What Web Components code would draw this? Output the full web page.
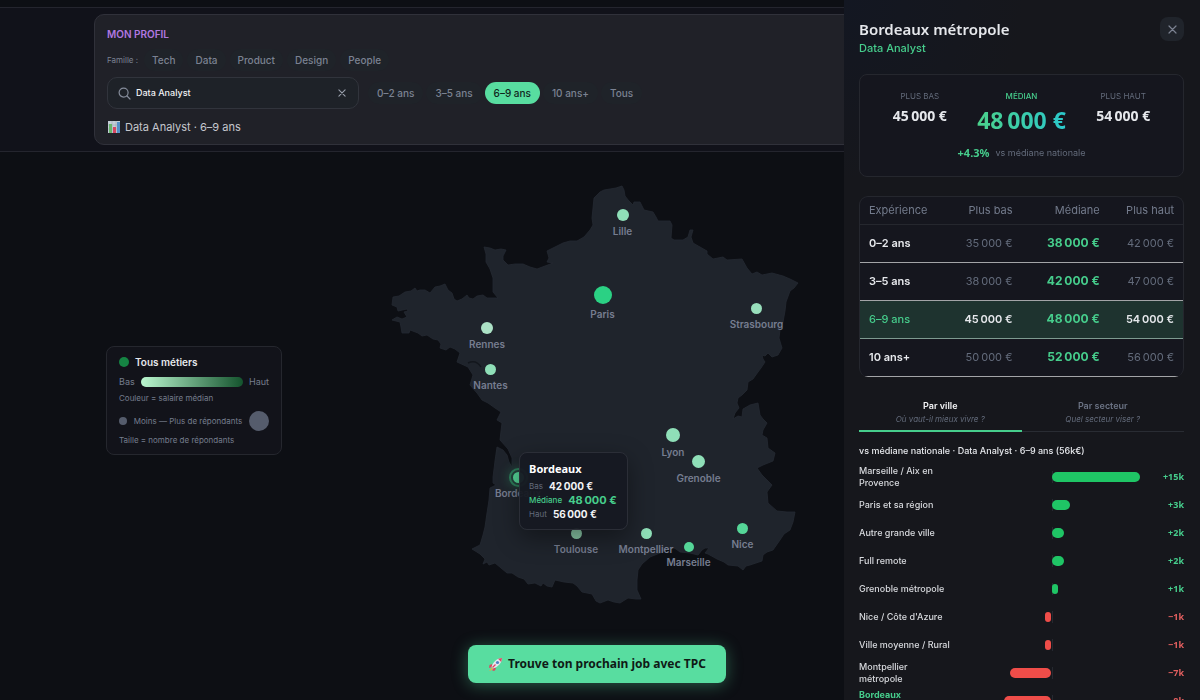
<!DOCTYPE html>
<html lang="fr">
<head>
<meta charset="utf-8">
<meta name="viewport" content="width=device-width, initial-scale=1">
<title>Salaires par ville</title>
<style>
  :root {
    --ink: #e6e8ec;
    --muted: #757d8d;
    --dim: #636b7b;
    --green: #46cd8c;
    --mint: #58dda0;
    --line: #25272e;
    --surface: #15161e;
    --display: "Noto Sans", "Open Sans", sans-serif;
    --body: Inter, "Liberation Sans", sans-serif;
  }
  body { margin: 0; background: #0d0f14; color: var(--ink); font: 11px/14px var(--body); }
</style>
</head>
<body>
<salary-app></salary-app>

<script>
const define = (name, html, setup) => {
  const tpl = document.createElement('template');
  tpl.innerHTML = html;
  customElements.define(name, class extends HTMLElement {
    constructor() {
      super();
      this.attachShadow({ mode: 'open' }).append(tpl.content.cloneNode(true));
    }
    connectedCallback() { if (setup) setup(this, this.shadowRoot); }
  });
};

const cross = size => `<svg width="${size}" height="${size}" viewBox="0 0 9 9" fill="none" stroke="currentColor" stroke-width="1.2" stroke-linecap="round" aria-hidden="true"><path d="M1 1l7 7M8 1L1 8"/></svg>`;

// French amounts: narrow space between thousands, plain no-break space before the sign.
const euros = k => `${k}&#8239;000&nbsp;€`;

define('filter-pill', `
<style>
  :host { display: block; }
  button { display: block; box-sizing: border-box; height: 22px; padding: 0 var(--pill-pad, 9px); border: 0; border-radius: 11px;
    background: #1f2329; color: #7b8292; font: 500 10px/22px var(--body); white-space: nowrap; cursor: pointer; }
  :host([active]) button { background: var(--mint); color: #10261c; }
</style>
<button type="button"><slot></slot></button>`);

define('profile-card', `
<style>
  :host { display: block; border: 1px solid #30313a; border-radius: 10px; background: #202128; padding: 12px 12px 9px; }
  h2 { margin: 0 0 8px; font: 600 10px/14px var(--body); color: #b177e0; }
  .row { display: flex; align-items: center; gap: 3px; }
  .family { --pill-pad: 8px; gap: 4px; margin-bottom: 6px; }
  .family span { font-size: 8px; color: #7b8292; margin-right: 2px; }
  .search { box-sizing: border-box; width: 252px; height: 32px; margin-right: 6px; padding: 0 12px 0 10px; display: flex; align-items: center; gap: 5px;
    border: 1px solid #31343c; border-radius: 10px; background: #1e2228; color: #858c9a; }
  .search svg { flex: none; display: block; }
  input { flex: 1; min-width: 0; padding: 0; border: 0; outline: 0; background: none; color: #f2f3f5; font: 500 9px/14px var(--body); }
  .clear { padding: 0; border: 0; background: none; color: #9ba1ad; cursor: pointer; }
  p { display: flex; align-items: center; gap: 4px; margin: 10px 0 0; color: #c6c8ce; font: 400 11px/16px var(--body); }
</style>
<h2>MON PROFIL</h2>
<div class="row family">
  <span>Famille :</span>
  <filter-pill>Tech</filter-pill><filter-pill>Data</filter-pill><filter-pill>Product</filter-pill><filter-pill>Design</filter-pill><filter-pill>People</filter-pill>
</div>
<div class="row">
  <div class="search">
    <svg width="13" height="13" viewBox="0 0 13 13" fill="none" stroke="currentColor" stroke-width="1.2" stroke-linecap="round" aria-hidden="true"><circle cx="5.6" cy="5.6" r="4.5"/><path d="M9 9l3 3"/></svg>
    <input type="text" aria-label="Métier" value="Data Analyst">
    <button class="clear" type="button" aria-label="Effacer">${cross(8)}</button>
  </div>
  <filter-pill>0–2 ans</filter-pill><filter-pill>3–5 ans</filter-pill><filter-pill active>6–9 ans</filter-pill><filter-pill>10 ans+</filter-pill><filter-pill>Tous</filter-pill>
</div>
<p>
  <svg width="14" height="14" viewBox="0 0 14 14" aria-hidden="true"><rect x="1" y="1" width="12" height="12" fill="#c4cdd6"/><path d="M1 5h12M1 9h12M5 1v12M9 1v12" stroke="#9faab8" stroke-width=".6"/><rect x="2" y="4" width="3" height="9" fill="#67b36b"/><rect x="6" y="7" width="3" height="6" fill="#d64560"/><rect x="10" y="2" width="3" height="11" fill="#5490c8"/></svg>
  <span>Data Analyst · 6–9 ans</span>
</p>`);

define('map-legend', `
<style>
  :host { display: block; box-sizing: border-box; width: 176px; padding: 8px 12px 9px; border: 1px solid var(--line); border-radius: 8px;
    background: #12131a; color: var(--muted); font: 400 8px/10px var(--body); }
  .row { display: flex; align-items: center; justify-content: space-between; }
  .title { gap: 6px; justify-content: flex-start; font: 600 10px/14px var(--body); color: var(--ink); margin-bottom: 6px; }
  .title i { width: 10px; height: 10px; border-radius: 50%; background: #158443; }
  .scale { gap: 6px; font: 400 9px/14px var(--body); margin-bottom: 4px; }
  .scale i { flex: 1; height: 10px; border-radius: 5px; background: linear-gradient(90deg, #bbf7d0, #14532d); }
  .size { height: 20px; margin: 8px 0 4px; }
  .small, .big { border-radius: 50%; background: #555c6c; }
  .small { width: 8px; height: 8px; }
  .big { width: 20px; height: 20px; }
</style>
<div class="row title"><i></i>Tous métiers</div>
<div class="row scale"><span>Bas</span><i></i><span>Haut</span></div>
<div>Couleur = salaire médian</div>
<div class="row size"><i class="small"></i><span>Moins — Plus de répondants</span><i class="big"></i></div>
<div>Taille = nombre de répondants</div>`);

define('city-pin', `
<style>
  :host { position: absolute; width: 0; height: 0; display: flex; flex-direction: column; align-items: center; }
  i { flex: none; width: var(--d); height: var(--d); margin-top: calc(var(--d) / -2); border-radius: 50%; background: var(--c); }
  span { margin-top: 4px; font: 600 10px/12px var(--body); color: #767d90; white-space: nowrap; }
  :host([selected]) i { outline: 2px solid #2d7d5a; outline-offset: 2px; box-shadow: 0 0 12px 4px #46cd8c55; }
</style>
<i></i><span><slot></slot></span>`);

define('city-tooltip', `
<style>
  :host { display: block; box-sizing: border-box; width: 109px; padding: 8px 9px; border: 1px solid #2b2e37; border-radius: 8px;
    background: #161922f2; box-shadow: 0 8px 24px #0006; color: var(--dim); font: 400 8px/14px var(--body); white-space: nowrap; }
  h3 { margin: 0 0 3px; font: 700 11px/15px var(--display); color: #fff; }
  div { display: flex; align-items: center; gap: 6px; }
  b { font: 700 10px/14px var(--body); color: #f2f3f5; }
  .med { color: var(--green); font-weight: 500; }
  .med b { font-size: 11px; color: inherit; }
</style>
<h3>Bordeaux</h3>
<div>Bas <b>${euros(42)}</b></div>
<div class="med">Médiane <b>${euros(48)}</b></div>
<div>Haut <b>${euros(56)}</b></div>`);

const cities = [
  ['Lille', 622.5, 215, 12, '#8fdfb8'], ['Paris', 602.5, 295, 18, '#2bd184'], ['Strasbourg', 756.5, 308, 11, '#98dfbc'],
  ['Rennes', 487, 328, 12, '#ace2c6'], ['Nantes', 490.5, 369, 11, '#8fdfb8'], ['Lyon', 673, 435, 14, '#8fdfb8'],
  ['Grenoble', 698.5, 461, 13, '#8fdfb8'], ['Bordeaux', 518, 477, 11, '#55d698'], ['Toulouse', 576, 533, 11, '#8ac9a8'],
  ['Montpellier', 646, 533, 11, '#8fdfb8'], ['Marseille', 688.5, 547, 10, '#55d698'], ['Nice', 742.5, 528, 11, '#55d698']
];

define('france-map', `
<style>
  :host { display: block; position: relative; aspect-ratio: 440 / 456; }
  svg { display: block; width: 100%; height: 100%; }
  city-tooltip { position: absolute; left: 32.3%; top: 61.4%; }
</style>
<svg viewBox="377 172 440 456" aria-hidden="true">
  <path fill="#1f242c" stroke="#252932" stroke-width=".8" stroke-linejoin="round" d="M594 198L600 192 604 190 610 189 616 188 622 186 624 190 625 196 629 201 633 205 634 202 640 202 642 206 644 210 653 212 656 217 658 221 670 221 672 225 671 238 674 240 683 240 688 237 690 230 693 230 691 237 693 243 700 247 707 251 707 254 713 259 718 258 723 257 727 260 742 259 747 268 752 274 757 272 762 275 767 274 772 273 783 276 790 279 798 283 794 288 790 291 786 302 785 311 783 322 780 330 779 338 782 348 778 355 772 357 768 353 765 356 762 355 763 359 765 362 761 368 758 372 753 379 748 382 747 390 742 395 738 398 737 403 739 408 735 413 733 419 738 416 742 417 743 409 750 405 758 403 760 415 763 419 767 423 763 430 762 435 767 438 768 448 775 453 773 461 763 465 757 468 762 475 767 480 772 485 767 492 768 503 777 511 787 512 795 512 793 522 790 530 784 534 780 540 773 550 767 552 763 555 762 561 750 565 746 566 743 570 738 566 728 565 724 562 717 559 708 554 705 553 709 548 705 548 702 550 698 555 690 553 680 552 676 549 672 547 660 553 650 557 642 564 638 570 637 580 637 590 641 599 636 599 628 598 620 603 614 602 608 600 600 603 596 601 592 594 587 593 582 592 577 586 573 583 564 582 555 580 552 587 547 586 543 583 541 586 535 583 528 584 524 579 518 577 512 573 507 573 501 568 495 563 489 565 487 562 483 564 485 559 480 554 472 549 480 545 483 535 485 527 487 513 489 500 490 488 496 485 493 483 493 477 495 461 497 447 503 450 507 455 509 462 512 467 512 458 508 449 500 440 501 431 502 423 497 420 501 412 495 408 488 403 482 400 477 393 470 385 473 375 468 367 457 362 460 353 455 349 450 347 446 350 440 348 441 344 438 340 433 339 427 335 422 336 418 333 410 330 409 333 402 333 401 327 400 322 392 320 397 317 402 319 407 317 404 312 408 311 407 309 398 311 397 307 392 305 393 297 399 296 405 292 411 291 415 288 417 291 420 290 425 290 430 293 435 287 440 286 445 284 448 290 452 293 454 299 457 301 462 299 467 295 469 298 473 299 477 296 483 295 487 298 493 298 498 298 493 292 493 278 490 269 486 262 486 254 484 247 490 248 495 250 501 249 506 250 503 256 503 260 508 265 515 264 523 264 530 267 537 269 545 266 553 263 547 262 549 258 547 251 555 247 563 243 570 241 577 241 584 237 590 230 593 225 592 218 593 208Z"/>
  <path d="M468 363q8-4 13 4" fill="none" stroke="#13171d" stroke-width="1.4"/>
</svg>
<div id="pins"></div>
<city-tooltip></city-tooltip>`, (host, root) => {
  for (const [name, x, y, d, color] of cities) {
    const pin = document.createElement('city-pin');
    pin.textContent = name;
    pin.style.cssText = `left:${(x - 377) / 4.4}%;top:${(y - 172) / 4.56}%;--d:${d}px;--c:${color}`;
    pin.toggleAttribute('selected', name === 'Bordeaux');
    root.getElementById('pins').append(pin);
  }
});

define('job-link', `
<style>
  :host { display: block; }
  a { display: flex; align-items: center; gap: 5px; height: 38px; padding: 0 20px; border-radius: 8px; background: var(--mint);
    color: #0f1a16; font: 700 12px/38px var(--display); text-decoration: none; white-space: nowrap; box-shadow: 0 2px 16px #58dda060; }
</style>
<a href="#job">
  <svg width="15" height="15" viewBox="0 0 15 15" aria-hidden="true"><path d="M4 7L1.500 8 1 11 4 10ZM8 11L7 13.500 4.500 14 5 11Z" fill="#d94b63"/><path d="M3 12l-2 2 3-1 1-2-1-1z" fill="#f2a33c"/><path d="M14 1C9 1 5 5 3.500 10L5 11.500C10 10 14 6 14 1Z" fill="#e3e6ee"/><path d="M14 1l-4 .8L13.200 5Z" fill="#d94b63"/><circle cx="9.500" cy="5.500" r="1.600" fill="#4c83c3"/><path d="M7.500 7.500L4.500 10.500" stroke="#d94b63" stroke-width="1.300"/></svg>
  <span><slot></slot></span>
</a>`);

define('stat-card', `
<style>
  :host { display: block; box-sizing: border-box; padding: 16px 9px; border: 1px solid var(--line); border-radius: 8px; background: var(--surface); text-align: center; }
  dl { display: grid; grid-template-columns: repeat(3, 1fr); margin: 0 0 13px; }
  dt { margin-bottom: 6px; font: 400 8px/10px var(--body); color: var(--dim); }
  dd { margin: 0; font: 700 14px/18px var(--display); white-space: nowrap; }
  .med dt { color: var(--green); font-weight: 500; }
  .med dd { width: fit-content; margin: 0 auto; font-size: 23px; line-height: 26px; color: transparent; background: linear-gradient(90deg, #4bd18b, #2bc8cc); background-clip: text; -webkit-background-clip: text; }
  p { display: flex; justify-content: center; gap: 6px; margin: 0; color: var(--dim); font: 400 9px/14px var(--body); }
  b { color: var(--green); font: 700 11px/14px var(--display); }
</style>
<dl>
  <div><dt>PLUS BAS</dt><dd>${euros(45)}</dd></div>
  <div class="med"><dt>MÉDIAN</dt><dd>${euros(48)}</dd></div>
  <div><dt>PLUS HAUT</dt><dd>${euros(54)}</dd></div>
</dl>
<p><b>+4.3%</b><span>vs médiane nationale</span></p>`);

define('experience-table', `
<style>
  :host { display: block; overflow: hidden; border: 1px solid var(--line); border-bottom: 0; border-radius: 9px; background: var(--surface); }
  table { width: 100%; table-layout: fixed; border-collapse: separate; border-spacing: 0; }
  th, td { box-sizing: border-box; height: 38px; padding: 0 9px 2px; border-bottom: 1px solid #a3a4a7; text-align: right; font: 400 11px/14px var(--body); color: var(--dim); white-space: nowrap; }
  thead th { height: 28px; border-color: var(--line); color: #737b8c; }
  th:first-child { width: 24%; text-align: left; }
  th:nth-child(2) { width: 26%; }
  th:nth-child(3) { width: 27%; }
  tbody th { color: var(--ink); font-weight: 600; }
  td:nth-child(3) { color: var(--green); font-weight: 700; font-size: 12px; }
  .on > * { background: #1e332f; color: var(--ink); font-weight: 600; border-color: #7d9a90; }
  .on th { color: var(--green); font-weight: 500; }
</style>
<table>
  <thead><tr><th scope="col">Expérience</th><th scope="col">Plus bas</th><th scope="col">Médiane</th><th scope="col">Plus haut</th></tr></thead>
  <tbody>
    <tr><th scope="row">0–2 ans</th><td>${euros(35)}</td><td>${euros(38)}</td><td>${euros(42)}</td></tr>
    <tr><th scope="row">3–5 ans</th><td>${euros(38)}</td><td>${euros(42)}</td><td>${euros(47)}</td></tr>
    <tr class="on"><th scope="row">6–9 ans</th><td>${euros(45)}</td><td>${euros(48)}</td><td>${euros(54)}</td></tr>
    <tr><th scope="row">10 ans+</th><td>${euros(50)}</td><td>${euros(52)}</td><td>${euros(56)}</td></tr>
  </tbody>
</table>`);

define('compare-tabs', `
<style>
  :host { display: grid; grid-template-columns: 1fr 1fr; box-shadow: inset 0 -1px #292c33; }
  button { padding: 6px 0 5px; border: 0; border-bottom: 2px solid transparent; background: none; color: #6b7384; font: 600 9px/13px var(--body); cursor: pointer; }
  button[aria-selected=true] { border-color: var(--green); color: #f2f3f5; }
  small { display: block; margin-top: 1px; font: italic 400 8px/12px var(--body); color: var(--dim); }
</style>
<button type="button" role="tab" aria-selected="true">Par ville<small>Où vaut-il mieux vivre ?</small></button>
<button type="button" role="tab" aria-selected="false">Par secteur<small>Quel secteur viser ?</small></button>`);

define('delta-row', `
<style>
  :host { display: grid; grid-template-columns: 92px 1fr 31px; column-gap: 8px; align-items: center; height: 28px; font: 500 9px/12px var(--body); color: #d8dade; }
  :host([current]) { color: var(--green); font-weight: 700; }
  .track { display: grid; grid-template-columns: 1fr 1fr; align-items: center; height: 12px; background: linear-gradient(#262930, #262930) center / 1px 100% no-repeat; }
  i { height: 10px; min-width: 6px; border-radius: 5px; background: #1fc565; grid-column: 2; }
  b { font: 700 9px/12px var(--display); color: var(--green); text-align: right; }
  :host([down]) i { grid-column: 1; justify-self: end; background: #ef4d49; margin-right: 1px; }
  :host([down]) b { color: #e25f5f; }
</style>
<span><slot></slot></span><div class="track"><i></i></div><b></b>`, (host, root) => {
  const k = Number(host.getAttribute('k'));
  host.toggleAttribute('down', k < 0);
  root.querySelector('i').style.width = Math.abs(k) * 6.3 + '%';
  root.querySelector('b').textContent = (k < 0 ? '−' : '+') + Math.abs(k) + 'k';
});

define('city-panel', `
<style>
  :host { display: block; box-sizing: border-box; padding: 17px 16px 16px 15px; overflow: auto; scrollbar-width: none;
    background: radial-gradient(circle at 0 0, #131722, #16171c 180px); }
  header { display: flex; justify-content: space-between; align-items: flex-start; margin-bottom: 19px; }
  h1 { margin: 0; font: 600 15px/24px var(--display); }
  p { margin: 0; color: var(--green); font: 500 11px/14px var(--body); }
  header button { display: grid; place-items: center; width: 24px; height: 24px; padding: 0; border: 0; border-radius: 8px; background: #20242b; color: #7b8291; cursor: pointer; }
  experience-table { margin: 19px 0 16px; }
  h2 { margin: 13px 0 6px; font: 500 9px/12px var(--body); white-space: nowrap; }
</style>
<header>
  <div><h1>Bordeaux métropole</h1><p>Data Analyst</p></div>
  <button type="button" aria-label="Fermer">${cross(9)}</button>
</header>
<stat-card></stat-card>
<experience-table></experience-table>
<compare-tabs role="tablist"></compare-tabs>
<h2>vs médiane nationale · Data Analyst · 6–9 ans (56k€)</h2>
<delta-row k="15">Marseille / Aix en Provence</delta-row>
<delta-row k="3">Paris et sa région</delta-row>
<delta-row k="2">Autre grande ville</delta-row>
<delta-row k="2">Full remote</delta-row>
<delta-row k="1">Grenoble métropole</delta-row>
<delta-row k="-1">Nice / Côte d'Azure</delta-row>
<delta-row k="-1">Ville moyenne / Rural</delta-row>
<delta-row k="-7">Montpellier<br>métropole</delta-row>
<delta-row k="-8" current>Bordeaux<br>métropole</delta-row>`);

define('salary-app', `
<style>
  :host { display: block; padding-top: 7px; }
  .profile { padding: 6px 100px 6px 94px; border: solid #24252e; border-width: 1px 0; background: #11121a; }
  main { display: grid; grid-template-columns: 1fr minmax(0, 440px) 1fr; align-items: center; padding: 20px 100px 17px 94px; }
  map-legend { margin-left: 12px; }
  footer { display: flex; justify-content: center; padding: 0 100px 17px 94px; }
  city-panel { position: fixed; top: 0; right: 0; bottom: 0; width: 356px; z-index: 5; }
</style>
<div class="profile"><profile-card></profile-card></div>
<main><map-legend></map-legend><france-map></france-map></main>
<footer><job-link>Trouve ton prochain job avec TPC</job-link></footer>
<city-panel></city-panel>`);
</script>
</body>
</html>
